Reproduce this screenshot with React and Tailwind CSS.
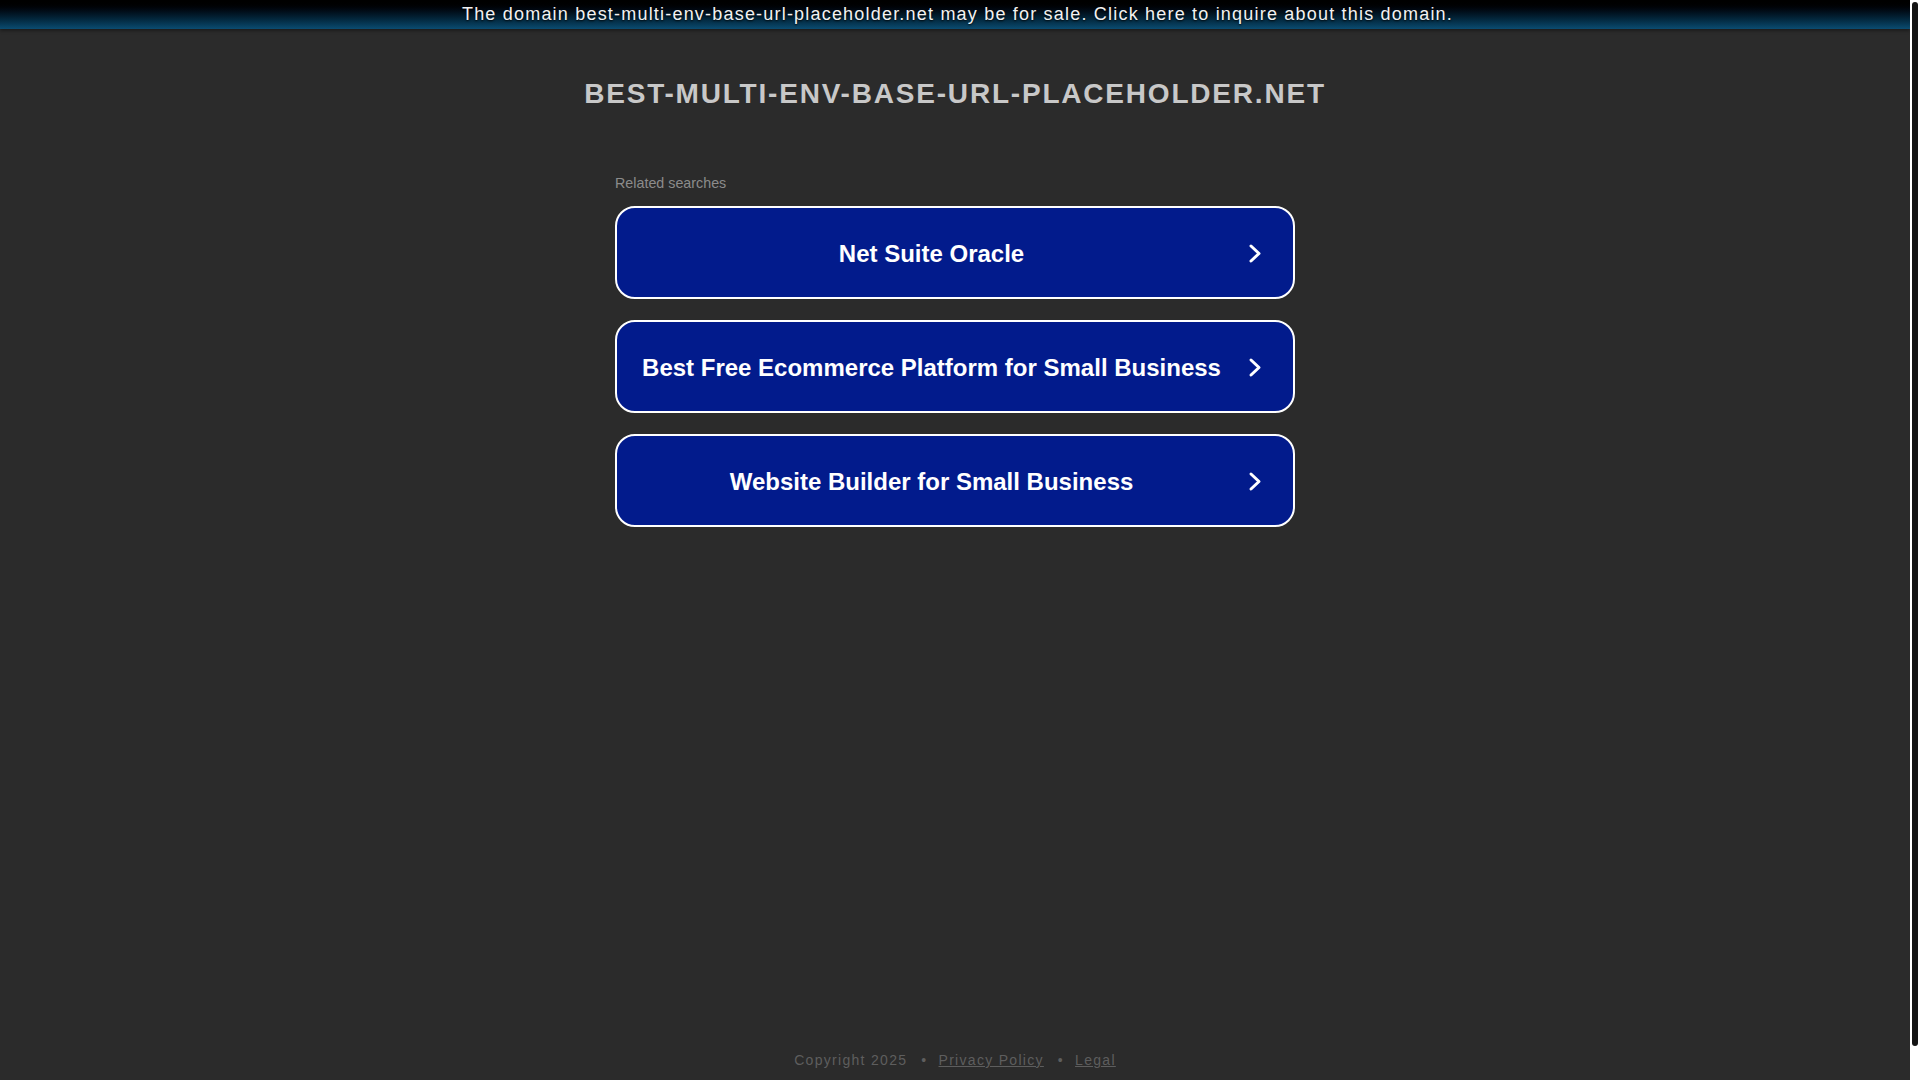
import React from "react";

const searches = [
  "Net Suite Oracle",
  "Best Free Ecommerce Platform for Small Business",
  "Website Builder for Small Business",
];

function Chevron() {
  return (
    <svg width="14" height="21" viewBox="0 0 14 21" className="ml-[26px] shrink-0">
      <polyline
        points="3,3 11,10.5 3,18"
        fill="none"
        stroke="#ffffff"
        strokeWidth="3"
        strokeLinecap="round"
        strokeLinejoin="round"
      />
    </svg>
  );
}

export default function App() {
  return (
    <div className="flex h-screen w-full overflow-hidden bg-[#2b2b2b] font-['Liberation_Sans',Arial,sans-serif]">
      <div className="flex min-w-0 flex-1 flex-col">
        <div className="flex h-[29px] items-center justify-center bg-gradient-to-b from-black to-[#0b4c71] pl-[5px] text-[18px] leading-[29px] tracking-[1.2px] text-[#f2f2f2] shadow-[0_2px_3px_rgba(0,0,0,0.35)] [text-shadow:0_1px_2px_rgba(0,0,0,0.9)]">
          The domain best-multi-env-base-url-placeholder.net may be for sale. Click here to inquire about this domain.
        </div>

        <div className="mt-[51px] h-[28px] text-center text-[28px] font-bold leading-[28px] tracking-[1.8px] text-[#c8c8c8]">
          BEST-MULTI-ENV-BASE-URL-PLACEHOLDER.NET
        </div>

        <div className="mx-auto mt-[67px] w-[680px]">
          <div className="h-[16px] text-[14.3px] leading-[16px] text-[#8c8c8c]">Related searches</div>
          <div className="mt-[15px] flex flex-col gap-[21px]">
            {searches.map((s) => (
              <div
                key={s}
                className="flex h-[93px] items-center rounded-[20px] border-2 border-white bg-[#021b8c] pl-[24px] pr-[31px] pt-[2px]"
              >
                <span className="flex-1 text-center text-[24px] font-bold leading-[28px] text-white">{s}</span>
                <Chevron />
              </div>
            ))}
          </div>
        </div>

        <div className="flex-1" />

        <div className="flex items-center justify-center pb-[12px] text-[14px] leading-[16px] tracking-[1.3px] text-[#5e5e5e]">
          <span>Copyright 2025</span>
          <span className="ml-[14px] mr-[11px]">•</span>
          <span className="underline">Privacy Policy</span>
          <span className="ml-[14px] mr-[11px]">•</span>
          <span className="underline">Legal</span>
        </div>
      </div>

      <div className="flex w-[10px] shrink-0 flex-col bg-white pt-[2px]">
        <div className="ml-[2px] h-[1044px] w-[6px] rounded-full bg-[#141414]" />
      </div>
    </div>
  );
}
